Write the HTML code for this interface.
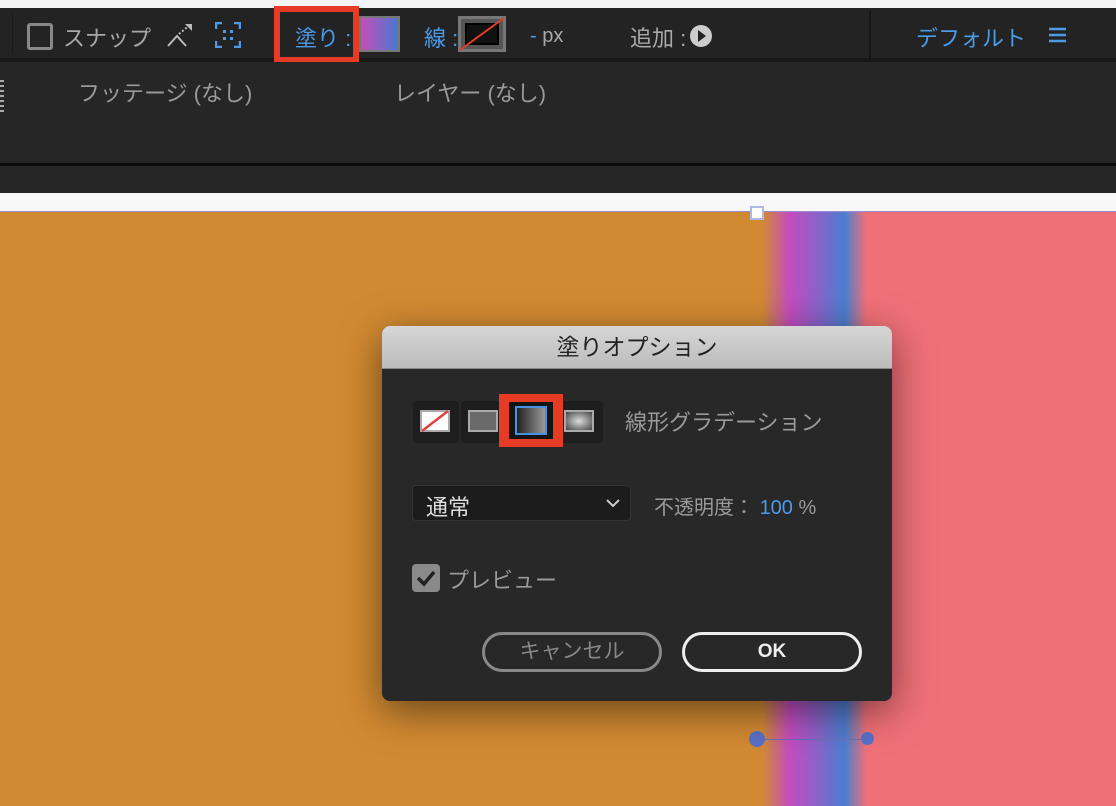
<!DOCTYPE html>
<html><head><meta charset="utf-8"><style>
*{margin:0;padding:0;box-sizing:border-box}
body{width:1116px;height:806px;overflow:hidden;position:relative;background:#232323;font-family:"Liberation Sans","Noto Sans CJK JP",sans-serif}
.a{position:absolute}
.t{color:#a8a8a8;font-size:20px;white-space:nowrap}
.b{color:#4b9be8}
</style></head><body>
<div class="a" style="left:0;top:0;width:1116px;height:8px;background:#f4f4f4"></div>
<div class="a" style="left:0;top:8px;width:1116px;height:50px;background:#232323"></div>
<div class="a" style="left:12px;top:14px;width:1px;height:40px;background:#1a1a1a"></div>
<div class="a" style="left:869px;top:10px;width:2px;height:48px;background:#161616"></div>
<div class="a" style="left:0;top:58px;width:1116px;height:4px;background:#181818"></div>
<!-- snap -->
<div class="a" style="left:27px;top:23px;width:26px;height:27px;border:3px solid #888;border-radius:3px"></div>
<div class="a t" style="left:63px;top:21px;font-size:22px">スナップ</div>
<svg class="a" style="left:165px;top:22px" width="30" height="28"><path d="M3 24 L12 14 L21 24" stroke="#bbb" stroke-width="2" fill="none"/><path d="M14 12 L26 2" stroke="#bbb" stroke-width="2" stroke-dasharray="2 2"/><path d="M20 2 L27 2 L27 9Z" fill="#bbb"/></svg>
<svg class="a" style="left:215px;top:22px" width="26" height="26"><path d="M1 7V1H7M19 1H25V7M25 19V25H19M7 25H1V19" stroke="#4b9be8" stroke-width="2.5" fill="none"/><rect x="8" y="8" width="3" height="3" fill="#4b9be8"/><rect x="15" y="8" width="3" height="3" fill="#4b9be8"/><rect x="8" y="15" width="3" height="3" fill="#4b9be8"/><rect x="15" y="15" width="3" height="3" fill="#4b9be8"/></svg>
<div class="a" style="left:274px;top:6px;width:85px;height:57px;border:6px solid #e63c25"></div>
<div class="a t b" style="left:295px;top:21px;font-size:22px">塗り :</div>
<div class="a" style="left:359px;top:16px;width:41px;height:36px;background:#777;padding:2px"><div style="width:100%;height:100%;background:linear-gradient(90deg,#c54fb8,#4a78d0)"></div></div>
<div class="a t b" style="left:424px;top:21px;font-size:22px">線 :</div>
<div class="a" style="left:458px;top:16px;width:48px;height:36px;background:#777;padding:3px"><div style="width:100%;height:100%;background:#555;padding:4px"><div style="width:100%;height:100%;background:#111;border:2px solid #000"></div></div></div>
<svg class="a" style="left:458px;top:16px" width="48" height="36"><line x1="2" y1="34" x2="46" y2="2" stroke="#e63c25" stroke-width="2"/></svg>
<div class="a t b" style="left:530px;top:25px;font-size:20px">- <span style="color:#a8a8a8">px</span></div>
<div class="a t" style="left:630px;top:21px;font-size:22px">追加 :</div>
<div class="a" style="left:690px;top:25px;width:22px;height:22px;border-radius:50%;background:#ccc"></div>
<svg class="a" style="left:690px;top:25px" width="22" height="22"><path d="M8 5L16 11L8 17Z" fill="#232323"/></svg>
<div class="a t b" style="left:916px;top:21px;font-size:22px">デフォルト</div>
<svg class="a" style="left:1049px;top:27px" width="18" height="16"><path d="M0 2H17M0 8H17M0 14H17" stroke="#4b9be8" stroke-width="2.5"/></svg>
<!-- panel -->
<div class="a" style="left:0;top:62px;width:1116px;height:102px;background:#262626"></div>
<div class="a" style="left:0;top:80px;width:4px;height:34px;background:repeating-linear-gradient(#aaa 0 2px,transparent 2px 5px)"></div>
<div class="a t" style="left:78px;top:76px;font-size:22px;color:#9a9a9a">フッテージ (なし)</div>
<div class="a t" style="left:394px;top:76px;font-size:22px;color:#9a9a9a">レイヤー (なし)</div>
<div class="a" style="left:0;top:163px;width:1116px;height:3px;background:#0c0c0c"></div>
<div class="a" style="left:0;top:166px;width:1116px;height:27px;background:#262626"></div>
<div class="a" style="left:0;top:193px;width:1116px;height:19px;background:#f8f8f8"></div>
<!-- canvas -->
<div class="a" style="left:0;top:212px;width:1116px;height:594px;background:linear-gradient(90deg,#d28a32 0,#d28a32 762px,#c44cc0 790px,#9060c8 815px,#4a7fd0 845px,#f07078 866px,#f07078 100%)"></div>
<div class="a" style="left:0;top:211px;width:1116px;height:1px;background:#9a8ad0"></div>
<div class="a" style="left:750px;top:206px;width:14px;height:14px;background:#fff;border:2px solid #b0b8e0"></div>
<div class="a" style="left:749px;top:731px;width:16px;height:16px;border-radius:50%;background:#5a70c8"></div>
<div class="a" style="left:861px;top:732px;width:13px;height:13px;border-radius:50%;background:#5a70c8"></div>
<div class="a" style="left:765px;top:739px;width:98px;height:1px;background:#6a70b8"></div>
<!-- dialog -->
<div class="a" style="left:382px;top:326px;width:510px;height:375px;border-radius:8px;background:#282828;box-shadow:0 10px 40px rgba(0,0,0,.5);overflow:hidden">
<div style="height:43px;background:linear-gradient(#d6d6d6,#bcbcbc);text-align:center;font-size:23px;line-height:43px;color:#222;border-bottom:1px solid #888">塗りオプション</div>
</div>
<div class="a" style="left:413px;top:401px;width:46px;height:42px;background:#1e1e1e;border-radius:4px"></div>
<div class="a" style="left:461px;top:401px;width:142px;height:42px;background:#1e1e1e;border-radius:4px"></div>
<div class="a" style="left:420px;top:410px;width:30px;height:22px;background:#fff;border:2px solid #aaa"></div>
<svg class="a" style="left:420px;top:410px" width="30" height="22"><line x1="2" y1="21" x2="28" y2="1" stroke="#e04040" stroke-width="2.5"/></svg>
<div class="a" style="left:468px;top:410px;width:30px;height:22px;background:#6a6a6a;border:2px solid #aaa"></div>
<div class="a" style="left:499px;top:394px;width:64px;height:53px;background:#e63c25;padding:8px 10px"><div style="width:100%;height:100%;background:#141414;padding:4px 6px"><div style="width:100%;height:100%;border:2px solid #4a90e0;background:linear-gradient(90deg,#222,#999)"></div></div></div>
<div class="a" style="left:564px;top:410px;width:30px;height:22px;border:2px solid #aaa;background:radial-gradient(#ddd,#444)"></div>
<div class="a t" style="left:625px;top:405px;font-size:22px;color:#9a9a9a">線形グラデーション</div>
<div class="a" style="left:412px;top:485px;width:219px;height:36px;background:#1c1c1c;border:1px solid #333;border-radius:4px"></div>
<div class="a t" style="left:426px;top:490px;font-size:22px;color:#ddd">通常</div>
<svg class="a" style="left:605px;top:498px" width="16" height="10"><path d="M2 2L8 8L14 2" stroke="#ccc" stroke-width="2" fill="none"/></svg>
<div class="a t" style="left:654px;top:491px;font-size:20px;color:#9a9a9a">不透明度： <span class="b">100</span> %</div>
<div class="a" style="left:412px;top:564px;width:28px;height:28px;background:#8a8a8a;border-radius:4px"></div>
<svg class="a" style="left:412px;top:564px" width="28" height="28"><path d="M6 14L12 20L22 8" stroke="#222" stroke-width="3.5" fill="none"/></svg>
<div class="a t" style="left:447px;top:563px;font-size:22px;color:#9a9a9a">プレビュー</div>
<div class="a" style="left:482px;top:632px;width:180px;height:40px;border:3px solid #888;border-radius:20px;text-align:center;line-height:34px;font-size:21px;color:#888">キャンセル</div>
<div class="a" style="left:682px;top:632px;width:180px;height:40px;border:3px solid #eee;border-radius:20px;text-align:center;line-height:34px;font-size:19px;color:#eee;font-weight:bold">OK</div>
</body></html>
